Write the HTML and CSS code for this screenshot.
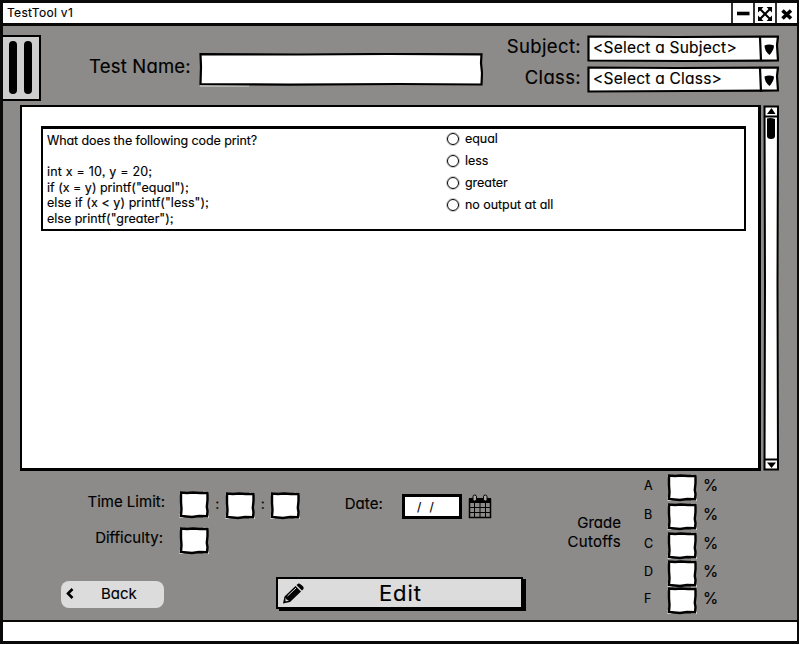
FILE: index.html
```html
<!DOCTYPE html>
<html lang="en">
<head>
<meta charset="utf-8">
<title>TestTool v1</title>
<link rel="stylesheet" href="styles.css">
</head>
<body>
<svg class="defs" aria-hidden="true">
  <symbol id="cell" viewBox="0 0 31 28">
    <path d="M.5 .5h4v3h-4zM24 0h6v3h-6zM.5 23h4v4h-4zM24 24.500h6v2.500h-6z" fill="#e4e4e2"/>
    <path d="M2 1.500 8 2 14 1.500 21 2 28.500 1.700 28.500 9 27.800 16 28.500 20 28 25.300 20 25 13 26 2 25 2.500 18 2 11z" fill="#fff" stroke="#000" stroke-width="2.400"/>
  </symbol>
</svg>
<div class="window">
  <header class="titlebar">
    <h1>TestTool v1</h1>
    <span class="winbtn"><svg width="20" height="19" viewBox="0 0 20 19"><path d="M4 10.500h12.500" stroke="#000" stroke-width="3.600"/></svg></span>
    <span class="winbtn"><svg width="20" height="19" viewBox="0 0 20 19"><path d="M5 6 15 16M15 6 5 16" stroke="#000" stroke-width="2"/><path d="M3 4h5.500L3 9.500zM17 4h-5.500L17 9.500zM3 18h5.500L3 12.500zM17 18h-5.500L17 12.500z"/></svg></span>
    <span class="winbtn"><svg width="20" height="19" viewBox="0 0 20 19"><path d="M5.500 7.500 14 15.500M14 7.500 5.500 15.500" stroke="#000" stroke-width="3.600"/></svg></span>
  </header>

  <section class="toolbar">
    <button class="menu" aria-label="Menu"><i></i><i></i></button>
    <label class="name-label">Test Name:</label>
    <svg class="name-input" width="284" height="35" viewBox="0 0 284 35"><path d="M1 33H50" stroke="#ddd" fill="none"/><path d="M1.500 1.200 100 1.500 190 1 282.500 1.300 282 10 283 20 282.500 31.500 200 31 90 31.700 1.500 31 2 14z" fill="#fff" stroke="#000" stroke-width="2.200"/></svg>
    <div class="picks">
      <div class="pick"><label class="subject">Subject:</label><div class="select"><b>&lt;Select a Subject&gt;</b><svg width="192" height="28" viewBox="0 0 192 28"><path d="M1.500 1.500 90 2 191 1.500 190 10 191 25.500 100 26 1.500 25.500z" fill="#fff" stroke="#000" stroke-width="2.200"/><path d="M173 2 174 26" stroke="#000" stroke-width="2.200"/><path d="M177.500 10.500Q182 8.500 187 10.500 187 15 182.500 20 177.500 16 177.500 10.500"/></svg></div></div>
      <div class="pick"><label class="class">Class:</label><div class="select"><b>&lt;Select a Class&gt;</b><svg width="192" height="28" viewBox="0 0 192 28"><path d="M1.500 1.500 90 2 191 1.500 190 10 191 24.500 100 25 1.500 25.500z" fill="#fff" stroke="#000" stroke-width="2.200"/><path d="M173 2 174 26" stroke="#000" stroke-width="2.200"/><path d="M177.500 10.500Q182 8.500 187 10.500 187 15 182.500 20 177.500 16 177.500 10.500"/></svg></div></div>
    </div>
  </section>

  <main class="content">
    <div class="panel">
      <article class="question">
        <div class="code">
          <p class="prompt">What does the following code print?</p>
          <p>&nbsp;</p>
          <p class="decl">int x = 10, y = 20;</p>
          <p>if (x = y) printf("equal");</p>
          <p class="branch">else if (x &lt; y) printf("less");</p>
          <p>else printf("greater");</p>
        </div>
        <ul class="answers">
          <li>equal</li>
          <li>less</li>
          <li>greater</li>
          <li>no output at all</li>
        </ul>
      </article>
    </div>
    <div class="scroll">
      <svg width="16" height="366" viewBox="0 0 16 366"><path d="M1.500 1.500 15 1.500 14.500 180 15 364.500H1.500L2 180z" fill="#fff" stroke="#000" stroke-width="2"/><path d="M1 11.500H15M1 354.500H15" stroke="#000" stroke-width="2"/><path d="M8.500 3 12.500 9H4zM4 357.500h9L8.500 363z"/><path d="M4 13.500Q8 12.500 12 14V31Q12 34 8 34 4 34 4 31z"/></svg>
    </div>
  </main>

  <footer class="settings">
    <div class="left">
      <div class="row time">
        <label>Time Limit:</label>
        <svg class="cell"><use href="#cell"/></svg><em>:</em>
        <svg class="cell low"><use href="#cell"/></svg><em>:</em>
        <svg class="cell low"><use href="#cell"/></svg>
        <label class="date">Date:</label>
        <div class="datebox">/&nbsp; /</div>
        <svg class="cal" width="24" height="25" viewBox="0 0 24 25"><path d="M1.500 5.500h21v18h-21z" fill="none" stroke="#000" stroke-width="1.500"/><path d="M1 4h22v5H1z"/><path d="M6.500 9v14M12 9v14M17.500 9v14M1 13.500h22M1 18.500h22" stroke="#000"/><rect x="5" y="1" width="3.500" height="6" rx="1.700" fill="#aaa" stroke="#000"/><rect x="15.500" y="1" width="3.500" height="6" rx="1.700" fill="#aaa" stroke="#000"/></svg>
      </div>
      <div class="row diff">
        <label>Difficulty:</label>
        <svg class="cell"><use href="#cell"/></svg>
      </div>
      <div class="row actions">
        <button class="back"><svg width="8" height="11" viewBox="0 0 8 11"><path d="M6.500 1 2 5.500 6.500 10" fill="none" stroke="#000" stroke-width="2.600"/></svg><span>Back</span></button>
        <button class="edit"><svg width="21" height="21" viewBox="0 0 21 21"><path d="M0 20.500 1.500 13.500 12.500 3 18 8.500 7 19zM13.500 2 15.500 .5Q17 0 20.500 4 21 5.500 20 6.500L19 7.500z"/><path d="M4.500 13 13 5" stroke="#ddd" stroke-width="1"/><path d="M2.500 14.500 3.500 16.500 6 17.500 2.500 18.500z" fill="#ddd"/></svg><span>Edit</span></button>
      </div>
    </div>
    <div class="grades">
      <p class="caption">Grade<br><span>Cutoffs</span></p>
      <div class="scale">
        <div class="grade"><b>A</b><svg class="cell"><use href="#cell"/></svg><i>%</i></div>
        <div class="grade"><b>B</b><svg class="cell"><use href="#cell"/></svg><i>%</i></div>
        <div class="grade"><b>C</b><svg class="cell"><use href="#cell"/></svg><i>%</i></div>
        <div class="grade"><b>D</b><svg class="cell"><use href="#cell"/></svg><i>%</i></div>
        <div class="grade"><b>F</b><svg class="cell"><use href="#cell"/></svg><i>%</i></div>
      </div>
    </div>
  </footer>
  <div class="statusbar"></div>
</div>
</body>
</html>
```
FILE: styles.css
```css
*, *::before { box-sizing: border-box; margin: 0; padding: 0; }
body { width: 800px; height: 645px; background: #fff; color: #000; overflow: hidden;
  font-family: Inter, "Liberation Sans", sans-serif; font-feature-settings: "cv11", "ss03"; -webkit-text-stroke: 0.15px #000; }
svg { display: block; flex: none; }
.defs { position: absolute; width: 0; height: 0; }
i, em { font-style: normal; }
b, h1 { font-weight: 400; }
button { font: inherit; font-feature-settings: inherit; color: inherit; border: 0; }

.window { width: 799px; height: 644px; background: #8c8b89; border: solid #0a0a0a; border-width: 3px 2px 3px 3px;
  display: flex; flex-direction: column; }

.titlebar { height: 23px; flex: none; background: #fff; border-bottom: 3px solid #0a0807; display: flex; }
.titlebar h1 { flex: 1; font-size: 12px; line-height: 20px; padding-left: 4px; letter-spacing: 0.3px; }
.winbtn { width: 22px; border-left: 2px solid #333; }

.toolbar { height: 79px; flex: none; display: flex; align-items: flex-start; }
.menu { width: 38px; height: 66px; margin-top: 9px; background: #cecece; border: 2px solid #000; border-left: 0;
  display: flex; gap: 7px; padding: 4px 0 0 6px; }
.menu i { width: 8px; height: 53px; border-radius: 4px; background: #000; }
.name-label { width: 158px; padding-left: 48px; margin-top: 27px; font-size: 18.5px; line-height: 26px; letter-spacing: 0.2px; }
.name-input { margin-top: 27px; }
.picks { margin: 9px 0 0 18px; display: flex; flex-direction: column; gap: 3px; }
.pick { display: flex; height: 28px; }
.pick label { width: 86px; padding-right: 6px; text-align: right; font-size: 18.5px; line-height: 23px; letter-spacing: 0.35px; }
.select { display: grid; }
.select > * { grid-area: 1 / 1; }
.select b { z-index: 1; padding-left: 6px; font-size: 15.5px; line-height: 25px; letter-spacing: 0.23px; }

.content { height: 366px; flex: none; display: flex; gap: 2px; padding-left: 17px; }
.panel { width: 741px; height: 366px; background: #fff; border: solid #000; border-width: 2px 3px 3px 2px; padding: 19px 0 0 19px; }
.question { width: 705px; height: 105px; border: 2px solid #000; border-width: 3px 2px 2px 2px; display: flex; padding: 4px 0 0 4px; }
.code { width: 400px; font-size: 12.5px; line-height: 15.6px; }
.code p { height: 15.6px; }
.code .prompt { letter-spacing: -0.09px; }
.code .decl { letter-spacing: 0.2px; }
.code .branch { letter-spacing: 0.06px; }
.answers { list-style: none; font-size: 12.5px; line-height: 22px; margin-top: -5px; letter-spacing: -0.05px; }
.answers li { display: flex; align-items: center; gap: 6px; height: 22px; }
.answers li::before { content: ""; width: 12px; height: 12px; border: 1.5px solid #000; outline: 0.5px solid #5555; outline-offset: -0.5px; border-radius: 50%; }

.settings { flex: 1; display: flex; }
.left { width: 560px; }
.row { display: flex; align-items: flex-start; }
.time { padding-top: 20px; height: 56px; }
.row label { font-size: 15px; line-height: 22px; text-align: right; width: 162px; margin-right: 14px; }
.cell { width: 31px; height: 28px; }
.low { margin-top: 1px; }
.row em { width: 14.5px; text-align: center; font-size: 14px; line-height: 26px; }
.row label.date { width: 82px; margin-right: 19px; margin-top: 2px; letter-spacing: 0.1px; }
.datebox { width: 60px; height: 25px; margin-top: 3px; background: #fff; border: 3px solid #000; font-size: 12px; line-height: 19px; padding-left: 12px; letter-spacing: 0.5px; }
.cal { margin: 3px 0 0 6px; }
.row.diff label { width: 160px; margin-right: 16px; }
.actions { margin-top: 22px; }
.back { width: 103px; height: 27px; margin: 4px 0 0 58px; border-radius: 8px; background: #dcdcdc; font-size: 15px; display: flex; align-items: center; padding: 0 0 2px 5px; }
.back span { margin-left: 27px; }
.edit { width: 247px; height: 32px; margin-left: 112px; background: #dcdcdc; border: 2px solid #000; box-shadow: 3px 2px 0 #000; font-size: 22px; display: flex; align-items: center; padding-left: 5px; }
.edit span { margin-left: 75px; letter-spacing: 0.9px; }

.grades { display: flex; }
.caption { width: 58px; padding-top: 42px; text-align: right; font-size: 15px; line-height: 19px; }
.caption span { letter-spacing: 0.25px; }
.scale { display: grid; grid-template-rows: 29px 29px 28px 27px 28px; margin: 3px 0 0 23px; }
.grade { display: flex; }
.grade b { width: 23px; font-size: 12.5px; line-height: 24px; }
.grade i { margin-left: 5px; font-size: 15.5px; line-height: 23px; }

.statusbar { height: 21px; flex: none; background: #fff; border-top: 2px solid #0a0807; }
```
